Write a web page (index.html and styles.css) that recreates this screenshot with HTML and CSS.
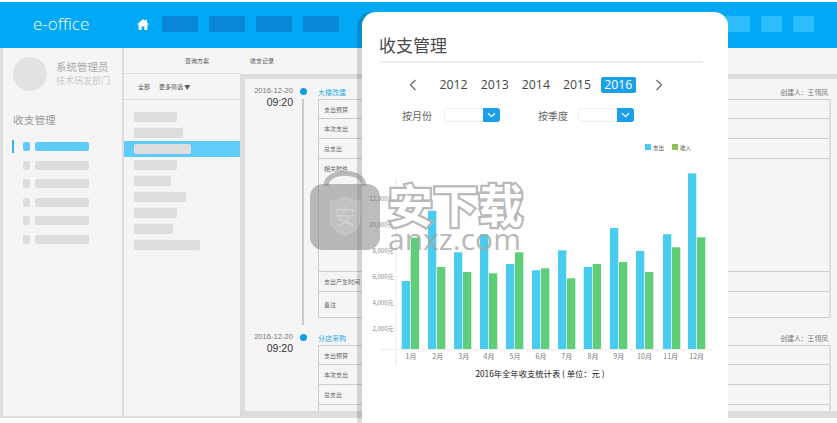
FILE: index.html
```html
<!DOCTYPE html>
<html lang="en">

<head>
    <meta charset="UTF-8">
    <title>e-office 收支管理</title>
    <link rel="stylesheet" href="styles.css">
</head>

<body>

    <!-- Header -->
    <div class="topbar">
        <div class="brand">e-office</div>
        <svg class="home" viewBox="0 0 12 11">
            <path d="M6 0 L8.2 2 V0.8 H10 V3.7 L12 5.6 H10.4 V11 H7.3 V7.4 H4.7 V11 H1.6 V5.6 H0 Z" fill="#fff" />
        </svg>
        <div class="nav-block"></div>
        <div class="nav-block"></div>
        <div class="nav-block"></div>
        <div class="nav-block"></div>
        <div class="nav-spacer"></div>
        <div class="nav-block light"></div>
        <div class="nav-block light small"></div>
        <div class="nav-block light small"></div>
    </div>

    <div class="main">
        <!-- Sidebar -->
        <div class="sidebar">
            <div class="profile">
                <div class="avatar"></div>
                <div>
                    <div class="user-name">系统管理员</div>
                    <div class="user-dept">技术研发部门</div>
                </div>
            </div>
            <div class="side-title">收支管理</div>
            <div class="menu">
                <div class="menu-item active"><span class="menu-icon"></span><span class="menu-bar"></span></div>
                <div class="menu-item"><span class="menu-icon"></span><span class="menu-bar"></span></div>
                <div class="menu-item"><span class="menu-icon"></span><span class="menu-bar"></span></div>
                <div class="menu-item"><span class="menu-icon"></span><span class="menu-bar"></span></div>
                <div class="menu-item"><span class="menu-icon"></span><span class="menu-bar"></span></div>
                <div class="menu-item"><span class="menu-icon"></span><span class="menu-bar"></span></div>
            </div>
        </div>

        <!-- Query list -->
        <div class="query">
            <div class="query-head">查询方案</div>
            <div class="query-filter"><span>全部</span><span>更多筛选 ▼</span></div>
            <div class="query-list">
                <div class="query-row"><span class="query-bar" style="width: 43px"></span></div>
                <div class="query-row"><span class="query-bar" style="width: 49px"></span></div>
                <div class="query-row active"><span class="query-bar" style="width: 57px"></span></div>
                <div class="query-row"><span class="query-bar" style="width: 43px"></span></div>
                <div class="query-row"><span class="query-bar" style="width: 37px"></span></div>
                <div class="query-row"><span class="query-bar" style="width: 52px"></span></div>
                <div class="query-row"><span class="query-bar" style="width: 43px"></span></div>
                <div class="query-row"><span class="query-bar" style="width: 39px"></span></div>
                <div class="query-row"><span class="query-bar" style="width: 66px"></span></div>
            </div>
        </div>

        <!-- Records timeline -->
        <div class="records">
            <div class="records-head">收支记录</div>
            <div class="records-body">
                <div class="entry">
                    <div class="when">
                        <div class="when-date">2016-12-20</div>
                        <div class="when-time">09:20</div>
                    </div>
                    <div class="mark"><span class="dot"></span><span class="line"></span></div>
                    <div class="detail">
                        <div class="detail-head"><span class="detail-title">大楼改建</span><span class="creator">创建人：王翎凤</span></div>
                        <div class="fields">
                            <div class="field first">支出预算</div>
                            <div class="field">本次支出</div>
                            <div class="field">总支出</div>
                            <div class="field tall">相关附件</div>
                            <div class="field">支出产生时间</div>
                            <div class="field note">备注</div>
                        </div>
                    </div>
                </div>
                <div class="entry">
                    <div class="when">
                        <div class="when-date">2016-12-20</div>
                        <div class="when-time">09:20</div>
                    </div>
                    <div class="mark"><span class="dot"></span></div>
                    <div class="detail">
                        <div class="detail-head"><span class="detail-title">分店采购</span><span class="creator">创建人：王翎凤</span></div>
                        <div class="fields">
                            <div class="field first">支出预算</div>
                            <div class="field">本次支出</div>
                            <div class="field">总支出</div>
                            <div class="field tall"></div>
                        </div>
                    </div>
                </div>
            </div>
        </div>
    </div>

    <!-- Floating card -->
    <div class="card">
        <h2>收支管理</h2>
        <div class="years">
            <svg class="chevron" viewBox="0 0 8 12"><path d="M6.5 1 L1.5 6 L6.5 11" /></svg>
            <div class="year-list">
                <span class="year">2012</span>
                <span class="year">2013</span>
                <span class="year">2014</span>
                <span class="year">2015</span>
                <span class="year current">2016</span>
            </div>
            <svg class="chevron next" viewBox="0 0 8 12"><path d="M1.5 1 L6.5 6 L1.5 11" /></svg>
        </div>
        <div class="filters">
            <span class="filter-label">按月份</span>
            <div class="select"><span class="select-btn"><svg viewBox="0 0 10 6"><path d="M1 1 L5 4.5 L9 1" /></svg></span></div>
            <span class="filter-label second">按季度</span>
            <div class="select"><span class="select-btn"><svg viewBox="0 0 10 6"><path d="M1 1 L5 4.5 L9 1" /></svg></span></div>
        </div>

        <!-- Chart, drawn in page coordinates -->
        <svg class="chart" viewBox="362 130 366 250">
            <rect class="expense-key" x="645" y="144" width="6" height="6" />
            <text class="legend" x="653" y="149.5">支出</text>
            <rect class="income-key" x="672" y="144" width="6" height="6" />
            <text class="legend" x="680" y="149.5">收入</text>

            <line class="axis" x1="396" y1="178" x2="396" y2="365" />
            <line class="axis" x1="380" y1="349.5" x2="712" y2="349.5" />
            <path class="axis" d="M423.3 349 V352 M449.3 349 V352 M475.3 349 V352 M501.3 349 V352 M527.3 349 V352 M553.3 349 V352 M579.3 349 V352 M605.7 349 V352 M631.7 349 V352 M657.7 349 V352 M683.7 349 V352" />

            <text class="y-label" x="393.5" y="201">12,000元</text>
            <text class="y-label" x="393.5" y="227">10,000元</text>
            <text class="y-label" x="393.5" y="253">8,000元</text>
            <text class="y-label" x="393.5" y="279">6,000元</text>
            <text class="y-label" x="393.5" y="305">4,000元</text>
            <text class="y-label" x="393.5" y="331">2,000元</text>

            <rect class="expense" x="401.7" y="281" width="8.3" height="68" />
            <rect class="income" x="410.7" y="237.7" width="8.3" height="111.3" />
            <rect class="expense" x="428" y="210.7" width="8.3" height="138.3" />
            <rect class="income" x="437" y="267" width="8.3" height="82" />
            <rect class="expense" x="454" y="252.3" width="8.3" height="96.7" />
            <rect class="income" x="463" y="272" width="8.3" height="77" />
            <rect class="expense" x="480" y="234.3" width="8.3" height="114.7" />
            <rect class="income" x="489" y="273.3" width="8.3" height="75.7" />
            <rect class="expense" x="506" y="264" width="8.3" height="85" />
            <rect class="income" x="515" y="252.3" width="8.3" height="96.7" />
            <rect class="expense" x="532" y="270.3" width="8.3" height="78.7" />
            <rect class="income" x="541" y="268.3" width="8.3" height="80.7" />
            <rect class="expense" x="558" y="250.3" width="8.3" height="98.7" />
            <rect class="income" x="567" y="278.3" width="8.3" height="70.7" />
            <rect class="expense" x="583.7" y="267" width="8.3" height="82" />
            <rect class="income" x="592.7" y="264" width="8.3" height="85" />
            <rect class="expense" x="610" y="228" width="8.3" height="121" />
            <rect class="income" x="619" y="262" width="8.3" height="87" />
            <rect class="expense" x="636" y="251" width="8.3" height="98" />
            <rect class="income" x="645" y="272" width="8.3" height="77" />
            <rect class="expense" x="663" y="234.3" width="8.3" height="114.7" />
            <rect class="income" x="672" y="247.3" width="8.3" height="101.7" />
            <rect class="expense" x="688" y="173.3" width="8.3" height="175.7" />
            <rect class="income" x="697" y="237.3" width="8.3" height="111.7" />

            <text class="x-label" x="411" y="358.5">1月</text>
            <text class="x-label" x="437.7" y="358.5">2月</text>
            <text class="x-label" x="463.7" y="358.5">3月</text>
            <text class="x-label" x="489" y="358.5">4月</text>
            <text class="x-label" x="515" y="358.5">5月</text>
            <text class="x-label" x="541" y="358.5">6月</text>
            <text class="x-label" x="566.7" y="358.5">7月</text>
            <text class="x-label" x="593" y="358.5">8月</text>
            <text class="x-label" x="618.7" y="358.5">9月</text>
            <text class="x-label" x="644.5" y="358.5">10月</text>
            <text class="x-label" x="670.7" y="358.5">11月</text>
            <text class="x-label" x="696.7" y="358.5">12月</text>

            <text class="chart-title" x="540" y="376.5">2016年全年收支统计表 ( 单位：元 )</text>
        </svg>
    </div>

    <!-- Download site watermark -->
    <div class="watermark">
        <svg class="lock" viewBox="0 0 70 80">
            <path class="lock-shackle" d="M16 16 C16 -1 54 -1 54 16" />
            <rect class="lock-body" x="0" y="14" width="70" height="66" rx="13" />
            <path class="lock-shield" d="M20 31 Q28 30 35 27 Q42 30 50 31 V49 Q50 59 35 66 Q20 59 20 49 Z" />
            <text class="lock-char" x="35" y="54">安</text>
        </svg>
        <div class="mark-text">
            <div class="mark-cn">安下载</div>
            <div class="mark-en">anxz.com</div>
        </div>
    </div>

</body>
</html>
```

FILE: styles.css
```css
body {
    margin: 0;
    width: 837px;
    height: 423px;
    overflow: hidden;
    position: relative;
    background-color: white;
    padding-top: 2px;
    box-sizing: border-box;
    font-family: 'Noto Sans CJK SC', 'Liberation Sans', sans-serif;
    color: #666;
}

/* Header */
.topbar {
    height: 46px;
    background-color: #00a8f5;
    display: flex;
    align-items: center;
}

.brand {
    width: 137px;
    padding-left: 33px;
    box-sizing: border-box;
    font-family: 'Open Sans', sans-serif;
    font-size: 17px;
    font-weight: 300;
    color: white;
    position: relative;
    top: -2px;
}

.home {
    width: 12px;
    height: 11px;
    margin-right: 13px;
    position: relative;
    top: -1px;
}

.nav-block {
    width: 36px;
    height: 16px;
    margin-right: 11px;
    border-radius: 1px;
    background-color: #0a86d6;
    position: relative;
    top: -1px;
}

.nav-spacer {
    width: 364px;
}

.nav-block.light {
    background-color: #2dbcff;
    border-radius: 2px;
}

.nav-block.small {
    width: 21px;
}

/* Three columns */
.main {
    height: 368px;
    display: flex;
    background-color: #f5f5f5;
    border-left: 3px solid #ddd;
    border-bottom: 2px solid #ddd;
}

.sidebar {
    width: 121px;
    flex-shrink: 0;
    padding: 9px 0 0 10px;
    box-sizing: border-box;
    border-right: 2px solid #ddd;
}

.profile {
    display: flex;
    align-items: center;
    gap: 9px;
}

.avatar {
    width: 34px;
    height: 34px;
    border-radius: 50%;
    background-color: #e2e2e2;
}

.user-name {
    font-size: 10.5px;
    line-height: 14px;
    color: #aaa;
    white-space: nowrap;
}

.user-dept {
    font-size: 9px;
    line-height: 14px;
    color: #ccc;
    white-space: nowrap;
}

.side-title {
    margin-top: 21px;
    font-size: 10.7px;
    line-height: 16px;
    color: #999;
}

.menu {
    margin: 12px 0 0 -1px;
    display: flex;
    flex-direction: column;
    gap: 5.5px;
}

.menu-item {
    height: 13px;
    display: flex;
    align-items: center;
    gap: 5px;
    padding-left: 9px;
    border-left: 2px solid transparent;
}

.menu-icon {
    width: 7px;
    height: 9px;
    border-radius: 2px;
    background-color: #ddd;
}

.menu-bar {
    width: 54px;
    height: 9px;
    border-radius: 2px;
    background-color: #ddd;
}

.menu-item.active {
    border-left-color: #3bb2ec;
}

.menu-item.active .menu-icon,
.menu-item.active .menu-bar {
    background-color: #5fcbf8;
}

/* Query column */
.query {
    width: 116px;
    flex-shrink: 0;
}

.query-head {
    height: 26px;
    line-height: 26px;
    padding-left: 61px;
    font-size: 6px;
    color: #555;
    border-bottom: 1px solid #ddd;
    box-sizing: border-box;
}

.query-filter {
    height: 26px;
    display: flex;
    align-items: center;
    gap: 9px;
    padding-left: 14px;
    font-size: 6px;
    color: #555;
    border-bottom: 1px solid #ddd;
    box-sizing: border-box;
}

.query-list {
    padding-top: 9px;
}

.query-row {
    height: 16px;
    display: flex;
    align-items: center;
    padding-left: 10px;
    margin-right: -1px;
}

.query-row.active {
    background-color: #5fcbf8;
}

.query-bar {
    height: 9.5px;
    border-radius: 2px;
    background-color: #ddd;
}

/* Records column */
.records {
    flex: 1;
    display: flex;
    flex-direction: column;
}

.records-head {
    height: 26px;
    line-height: 26px;
    padding-left: 10px;
    font-size: 6px;
    color: #555;
    flex-shrink: 0;
}

.records-body {
    flex: 1;
    overflow: hidden;
    border-top: 5px solid #ddd;
    border-left: 5px solid #ddd;
    border-bottom: 5px solid #ddd;
}

.entry {
    height: 246px;
    display: flex;
}

.when {
    width: 48px;
    padding-top: 6px;
    text-align: right;
    flex-shrink: 0;
}

.when-date {
    font-family: 'Liberation Sans', sans-serif;
    font-size: 7.6px;
    line-height: 11px;
    color: #777;
    white-space: nowrap;
}

.when-time {
    font-family: 'Liberation Sans', sans-serif;
    font-size: 10.5px;
    line-height: 12px;
    color: #333;
}

.mark {
    width: 20px;
    display: flex;
    flex-direction: column;
    align-items: center;
    flex-shrink: 0;
}

.dot {
    width: 7px;
    height: 7px;
    margin-top: 9px;
    border-radius: 50%;
    background-color: #0f9fe8;
    flex-shrink: 0;
}

.line {
    width: 2px;
    height: 231px;
    margin-top: 4px;
    background-color: #ccc;
}

.detail {
    width: 513px;
    margin-left: 5px;
    flex-shrink: 0;
}

.detail-head {
    height: 20px;
    display: flex;
    justify-content: space-between;
    align-items: center;
    padding: 6px 3px 0 0;
    box-sizing: border-box;
    font-size: 7px;
}

.detail-title {
    color: #2aa9e0;
}

.creator {
    color: #777;
    font-size: 6.8px;
}

.fields {
    border-left: 1px solid #ccc;
    border-right: 2px solid #ddd;
    border-bottom: 1px solid #ccc;
}

.field {
    height: 20px;
    line-height: 19px;
    padding-left: 5px;
    box-sizing: border-box;
    font-size: 6px;
    color: #666;
    border-top: 1px solid #ccc;
}

.field.first {
    height: 19px;
}

.field.tall {
    height: 113px;
}

.field.note {
    height: 26px;
    line-height: 25px;
}

/* Floating card */
.card {
    position: absolute;
    left: 362px;
    top: 12px;
    width: 366px;
    height: 430px;
    padding: 20px 25px 0 17px;
    box-sizing: border-box;
    background-color: white;
    border-radius: 14px;
    box-shadow: -5px 0 0 rgba(0, 0, 0, 0.14);
}

.card h2 {
    margin: 0;
    font-size: 17px;
    line-height: 26px;
    font-weight: normal;
    color: #4a4a4a;
    padding-bottom: 3px;
    border-bottom: 2px solid #eee;
}

.years {
    margin-top: 14px;
    height: 16px;
    padding-left: 30px;
    display: flex;
    align-items: center;
}

.chevron {
    width: 8px;
    height: 12px;
    flex-shrink: 0;
}

.chevron path {
    fill: none;
    stroke: #666;
    stroke-width: 1.2;
}

.chevron.next {
    margin-left: 19.5px;
}

.year-list {
    margin-left: 19px;
    display: flex;
    gap: 6.2px;
}

.year {
    width: 35px;
    height: 16px;
    line-height: 16px;
    text-align: center;
    font-family: 'Open Sans', sans-serif;
    font-size: 12.3px;
    color: #444;
}

.year.current {
    background-color: #1a9fe8;
    border-radius: 2px;
    color: white;
}

.filters {
    margin: 15px 0 0 23px;
    height: 14px;
    display: flex;
    align-items: center;
}

.filter-label {
    width: 30px;
    font-size: 10px;
    color: #666;
    margin-right: 11.5px;
}

.filter-label.second {
    margin-left: 38.5px;
    margin-right: 10px;
}

.select {
    width: 56px;
    height: 14px;
    box-sizing: border-box;
    border: 1px solid #eee;
    border-radius: 3px;
    display: flex;
    justify-content: flex-end;
}

.select-btn {
    width: 17px;
    margin: -1px;
    background-color: #1a9fe8;
    border-radius: 0 3px 3px 0;
    display: flex;
    align-items: center;
    justify-content: center;
}

.select-btn svg {
    width: 9px;
    height: 6px;
}

.select-btn path {
    fill: none;
    stroke: white;
    stroke-width: 1.3;
}

/* Chart */
.chart {
    display: block;
    position: relative;
    left: -17px;
    width: 366px;
    height: 250px;
    margin-top: 8px;
}

.axis {
    fill: none;
    stroke: #eee;
    stroke-width: 1.2;
}

.expense,
.expense-key {
    fill: #4accee;
}

.income {
    fill: #5fce78;
}

.income-key {
    fill: #8fbf52;
}

.legend {
    font-size: 5.5px;
    fill: #555;
}

.y-label {
    font-size: 6px;
    fill: #888;
    text-anchor: end;
}

.x-label {
    font-size: 7px;
    fill: #777;
    text-anchor: middle;
}

.chart-title {
    font-size: 8.3px;
    fill: #222;
    text-anchor: middle;
}

/* Watermark */
.watermark {
    position: absolute;
    left: 310px;
    top: 170px;
    display: flex;
    gap: 8px;
}

.lock {
    width: 70px;
    height: 80px;
    flex-shrink: 0;
}

.lock-shackle {
    fill: none;
    stroke: rgba(128, 128, 128, 0.5);
    stroke-width: 5;
}

.lock-body {
    fill: rgba(128, 128, 128, 0.52);
}

.lock-shield {
    fill: rgba(255, 255, 255, 0.14);
    stroke: rgba(255, 255, 255, 0.15);
}

.lock-char {
    font-size: 21px;
    fill: rgba(255, 255, 255, 0.22);
    text-anchor: middle;
}

.mark-text {
    width: 140px;
    margin-top: 9px;
}

.mark-cn {
    font-size: 45px;
    line-height: 50px;
    font-weight: bold;
    white-space: nowrap;
    color: #fff;
    -webkit-text-stroke: 4.5px rgba(175, 175, 175, 0.9);
    paint-order: stroke fill;
}

.mark-en {
    margin-top: -3px;
    font-family: 'Open Sans', sans-serif;
    font-size: 30px;
    line-height: 26px;
    white-space: nowrap;
    color: rgba(165, 165, 165, 0.8);
}
```
